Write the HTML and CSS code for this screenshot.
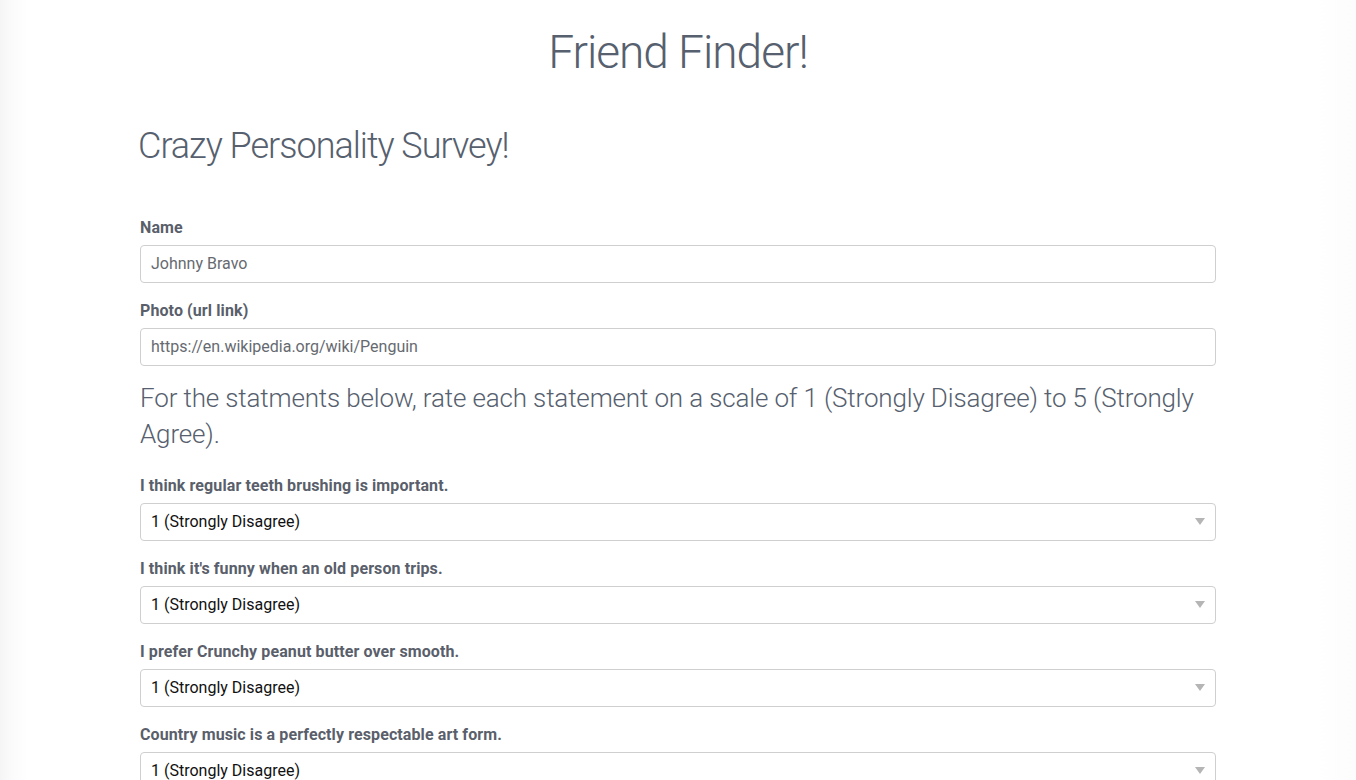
FILE: index.html
```html
<!DOCTYPE html>
<html lang="en">
<head>
<meta charset="utf-8">
<title>Friend Finder!</title>
<link rel="stylesheet" href="styles.css">
</head>
<body>
  <header class="site-title">Friend Finder!</header>
  <main class="survey">
    <h1 class="survey-title">Crazy Personality Survey!</h1>
    <form class="survey-form">
      <div class="field">
        <label class="field-label" for="name">Name</label>
        <input class="field-input" id="name" type="text" value="Johnny Bravo">
      </div>
      <div class="field">
        <label class="field-label" for="photo">Photo (url link)</label>
        <input class="field-input" id="photo" type="text" value="https://en.wikipedia.org/wiki/Penguin">
      </div>
      <h3 class="instructions">For the statments below, rate each statement on a scale of 1 (Strongly Disagree) to 5 (Strongly Agree).</h3>
      <div class="field">
        <label class="field-label" for="q1">I think regular teeth brushing is important.</label>
        <div class="select-wrap">
          <select class="field-select" id="q1">
            <option>1 (Strongly Disagree)</option><option>2</option><option>3</option><option>4</option><option>5 (Strongly Agree)</option>
          </select>
        </div>
      </div>
      <div class="field">
        <label class="field-label" for="q2">I think it's funny when an old person trips.</label>
        <div class="select-wrap">
          <select class="field-select" id="q2">
            <option>1 (Strongly Disagree)</option><option>2</option><option>3</option><option>4</option><option>5 (Strongly Agree)</option>
          </select>
        </div>
      </div>
      <div class="field">
        <label class="field-label" for="q3">I prefer Crunchy peanut butter over smooth.</label>
        <div class="select-wrap">
          <select class="field-select" id="q3">
            <option>1 (Strongly Disagree)</option><option>2</option><option>3</option><option>4</option><option>5 (Strongly Agree)</option>
          </select>
        </div>
      </div>
      <div class="field">
        <label class="field-label" for="q4">Country music is a perfectly respectable art form.</label>
        <div class="select-wrap">
          <select class="field-select" id="q4">
            <option>1 (Strongly Disagree)</option><option>2</option><option>3</option><option>4</option><option>5 (Strongly Agree)</option>
          </select>
        </div>
      </div>
    </form>
  </main>
</body>
</html>
```
FILE: styles.css
```css
* { box-sizing: border-box; }

html, body { height: 100%; }

body {
  margin: 0;
  font-family: Roboto, "Noto Sans", "Liberation Sans", sans-serif;
  color: #58616f;
  background: linear-gradient(to right, #f5f5f5 0, #fbfbfb 12px, #ffffff 28px, #ffffff calc(100% - 40px), #fcfcfc 100%);
  overflow: hidden;
}

.site-title {
  text-align: center;
  font-size: 46px;
  font-weight: 300;
  letter-spacing: -1px;
  line-height: 46px;
  padding-top: 29px;
  color: #56606e;
}

.survey {
  width: 1076px;
  margin: 0 auto;
}

.survey-title {
  margin: 52px 0 0 -2px;
  font-size: 36px;
  font-weight: 300;
  letter-spacing: -1px;
  line-height: 1.1;
  color: #56606e;
}

.survey-form {
  display: flex;
  flex-direction: column;
  margin-top: 50px;
}

.field {
  display: flex;
  flex-direction: column;
  margin-bottom: 17px;
}

.field-label {
  font-size: 16px;
  font-weight: 700;
  letter-spacing: 0.1px;
  line-height: 22px;
  color: #5a5f6b;
  margin-bottom: 6px;
}

.field-input,
.field-select {
  width: 100%;
  height: 38px;
  border: 1px solid #cfcfcf;
  border-radius: 4px;
  padding: 0 10px;
  font-family: Roboto, "Noto Sans", "Liberation Sans", sans-serif;
  font-size: 16px;
  background: #fff;
  outline: none;
}

.field-input { color: #666a70; }

.field-select {
  color: #111;
  appearance: none;
  -webkit-appearance: none;
}

.select-wrap { position: relative; }

.select-wrap::after {
  content: "";
  position: absolute;
  right: 11px;
  top: 15px;
  border-left: 5px solid transparent;
  border-right: 5px solid transparent;
  border-top: 7px solid #b5b5b5;
  pointer-events: none;
}

.instructions {
  margin: -3px 0 23px;
  font-size: 26px;
  font-weight: 300;
  letter-spacing: -0.15px;
  line-height: 36px;
  color: #56606e;
}
```
